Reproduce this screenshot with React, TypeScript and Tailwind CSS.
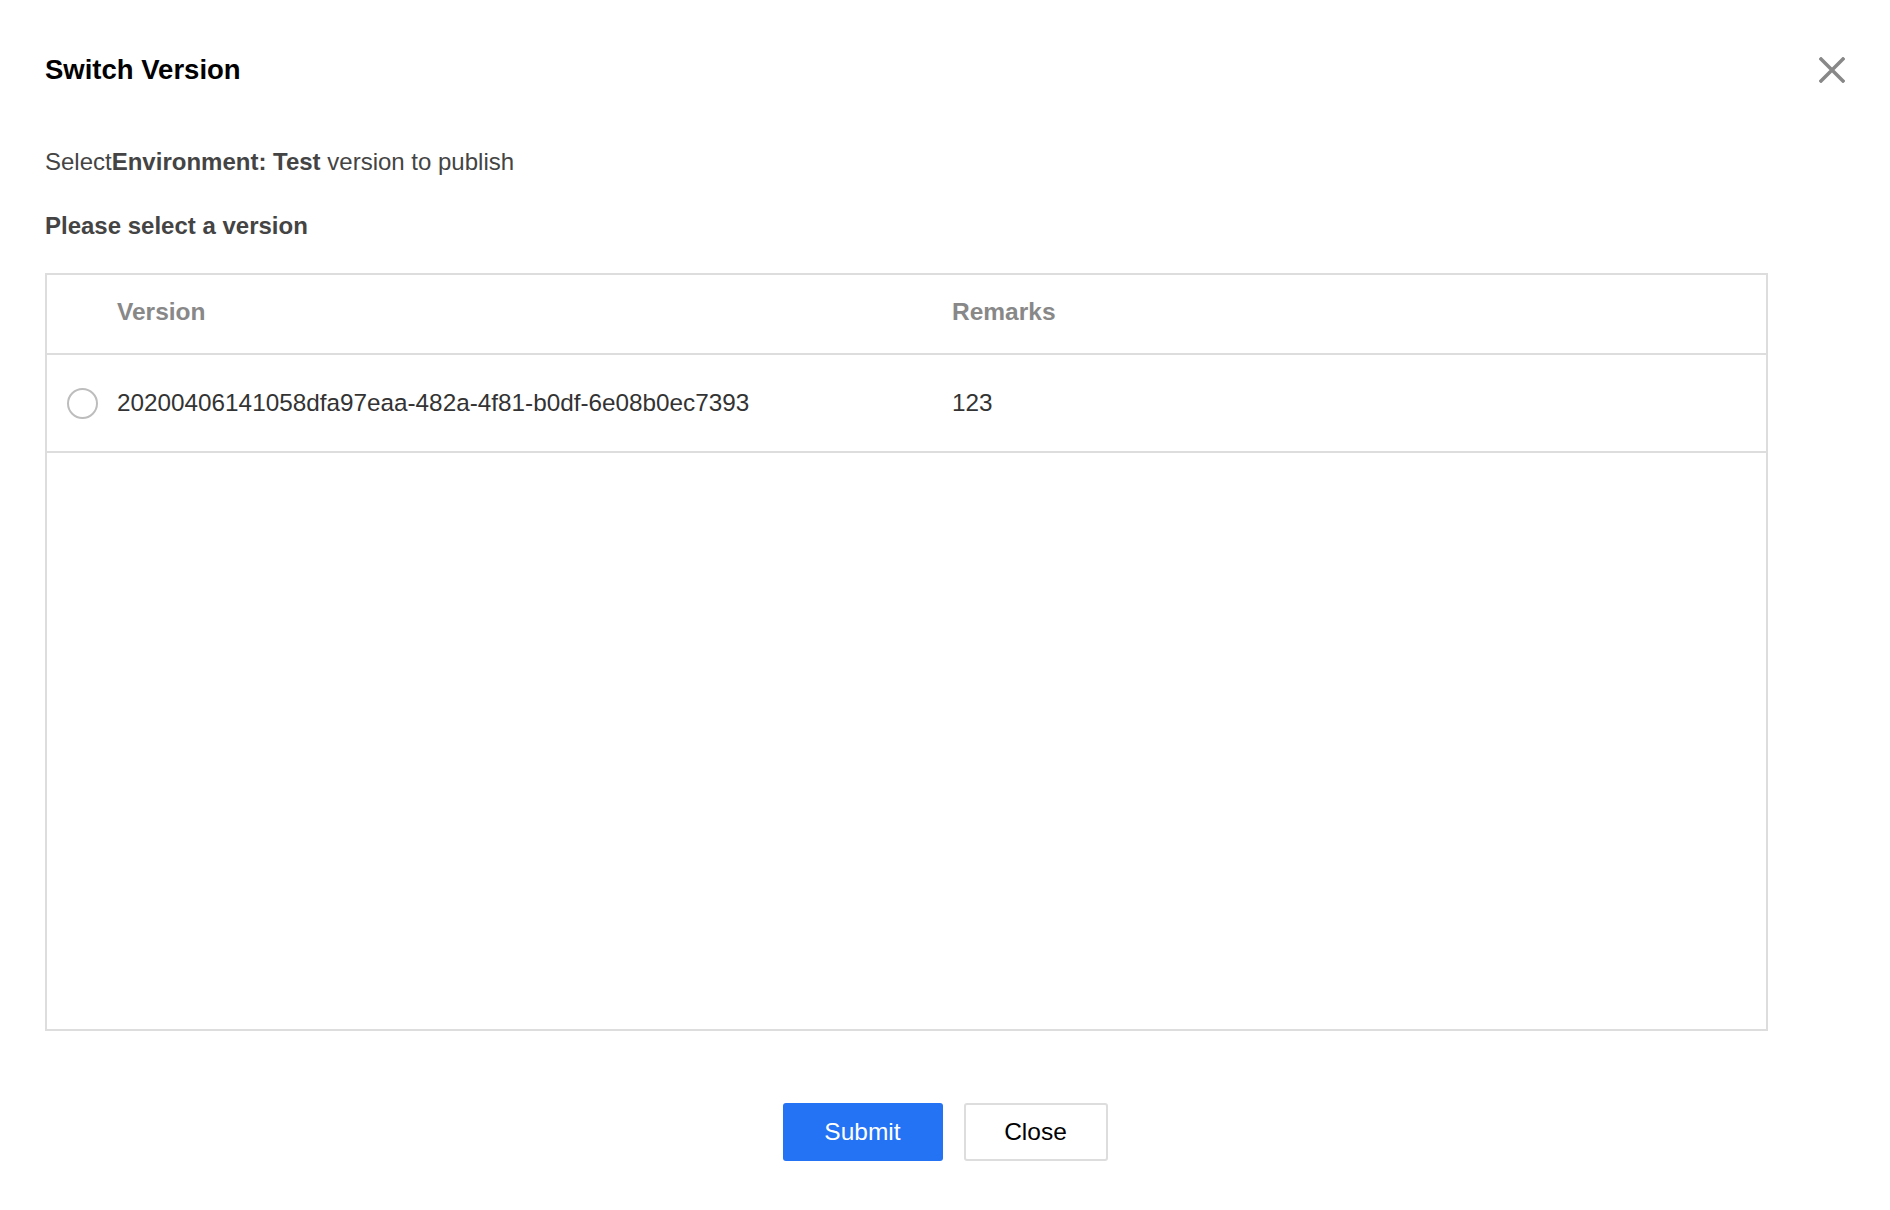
const versions = [
  { id: "20200406141058dfa97eaa-482a-4f81-b0df-6e08b0ec7393", remark: "123" },
];

function CloseIcon() {
  return (
    <svg width="26" height="26" viewBox="0 0 26 26" fill="none">
      <path d="M2 2L24 24M24 2L2 24" stroke="#888888" strokeWidth="3.5" strokeLinecap="square" />
    </svg>
  );
}

export default function App() {
  return (
    <div className="h-[1210px] w-[1890px] bg-white font-['Liberation_Sans',Arial,sans-serif] text-[#444]">
      <div className="flex items-center justify-between pl-[45px] pr-[38px] pt-[50px]">
        <h1 className="text-[27.5px] font-bold leading-[40px] text-black">Switch Version</h1>
        <button className="flex h-[40px] w-[40px] items-center justify-center">
          <CloseIcon />
        </button>
      </div>

      <div className="px-[45px]">
        <p className="mt-[55px] text-[24px] leading-[34px] text-[#444]">
          Select<span className="font-bold">Environment: Test</span> version to publish
        </p>
        <p className="mt-[30px] text-[24px] font-bold leading-[34px] text-[#444]">
          Please select a version
        </p>

        <div className="mt-[30px] flex h-[758px] w-[1723px] flex-col border-2 border-[#dddddd]">
          <div className="grid h-[80px] grid-cols-[905px_1fr] items-center border-b-2 border-[#dddddd] pb-[3px] text-[24.5px] font-bold text-[#888]">
            <div className="pl-[70px]">Version</div>
            <div>Remarks</div>
          </div>
          {versions.map((v) => (
            <div
              key={v.id}
              className="grid h-[98px] grid-cols-[905px_1fr] items-center border-b-2 border-[#dddddd] text-[24.3px] text-[#333]"
            >
              <div className="flex items-center pl-[20px]">
                <span className="mr-[19px] block h-[31px] w-[31px] rounded-full border-2 border-[#bdbdbd] bg-white" />
                <span>{v.id}</span>
              </div>
              <div>{v.remark}</div>
            </div>
          ))}
          <div className="flex-1" />
        </div>

        <div className="mt-[72px] flex justify-center gap-[21px]">
          <button className="h-[58px] w-[160px] rounded-[3px] bg-[#2473f5] text-[24.5px] text-white">
            Submit
          </button>
          <button className="h-[58px] w-[144px] rounded-[3px] border-2 border-[#dddddd] bg-white text-[24.5px] text-black">
            Close
          </button>
        </div>
      </div>
    </div>
  );
}
